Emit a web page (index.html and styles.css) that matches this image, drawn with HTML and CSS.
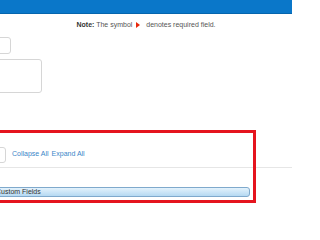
FILE: index.html
```html
<!DOCTYPE html>
<html>
<head>
<meta charset="utf-8">
<link rel="stylesheet" href="styles.css">
</head>
<body>
<header class="topbar"></header>
<p class="note"><b>Note:</b> The symbol <span class="req"></span> denotes required field.</p>
<div class="form">
  <div class="field"><input class="text" type="text"></div>
  <div class="field"><textarea class="area"></textarea></div>
</div>
<div class="section">
  <div class="toolbar">
    <input class="small" type="text">
    <a class="link" href="#">Collapse All</a>
    <a class="link" href="#">Expand All</a>
  </div>
  <div class="rule"></div>
  <div class="group">Custom Fields</div>
  <div class="highlight"></div>
</div>
</body>
</html>
```

FILE: styles.css
```css
html, body {
  margin: 0;
  padding: 0;
  background: #fff;
  overflow: hidden;
}
body {
  width: 292px;
  height: 208px;
  font-family: "Liberation Sans", Arial, sans-serif;
  font-size: 7px;
  color: #444;
}
.topbar {
  height: 13px;
  background: #0a77c9;
  border-bottom: 1px solid #0565ad;
}
.note {
  margin: 6px 0 0;
  line-height: 10px;
  text-align: center;
  font-size: 7px;
  color: #555;
}
.note b {
  color: #333;
}
.req {
  display: inline-block;
  width: 0;
  height: 0;
  border-top: 3px solid transparent;
  border-bottom: 3px solid transparent;
  border-left: 4px solid #e8280c;
  margin: 0 4px 0 2px;
  vertical-align: -1px;
}
.form {
  margin-top: 7px;
  display: flex;
  flex-direction: column;
  gap: 5px;
}
.field {
  display: flex;
}
.text, .area, .small {
  box-sizing: border-box;
  border: 1px solid #d6d6d6;
  border-radius: 3px;
  background: #fff;
  padding: 0;
  margin: 0;
  font: inherit;
  resize: none;
}
.text {
  width: 62px;
  height: 17px;
  margin-left: -51px;
}
.area {
  width: 93px;
  height: 34px;
  margin-left: -51px;
  display: block;
}
.section {
  position: relative;
  margin-top: 54px;
}
.toolbar {
  display: flex;
  align-items: center;
  gap: 3px;
  height: 16px;
  line-height: 8px;
}
.small {
  width: 57px;
  height: 16px;
  margin-left: -51px;
  margin-right: 3px;
}
.link {
  color: #3a86c8;
  text-decoration: none;
  font-size: 7px;
  margin-top: -2px;
}
.rule {
  margin-top: 4px;
  border-top: 1px solid #e6e6e6;
}
.group {
  box-sizing: border-box;
  margin-top: 19px;
  margin-left: -60px;
  width: 310px;
  height: 10px;
  line-height: 8px;
  padding-left: 55px;
  border: 1px solid #7fa9cc;
  border-radius: 3px;
  background: linear-gradient(#e3f2fc, #b5d9f2);
  color: #333;
  font-size: 7px;
}
.highlight {
  position: absolute;
  left: -20px;
  top: -17px;
  width: 276px;
  height: 73px;
  box-sizing: border-box;
  border: 3px solid #e5141e;
}
```
